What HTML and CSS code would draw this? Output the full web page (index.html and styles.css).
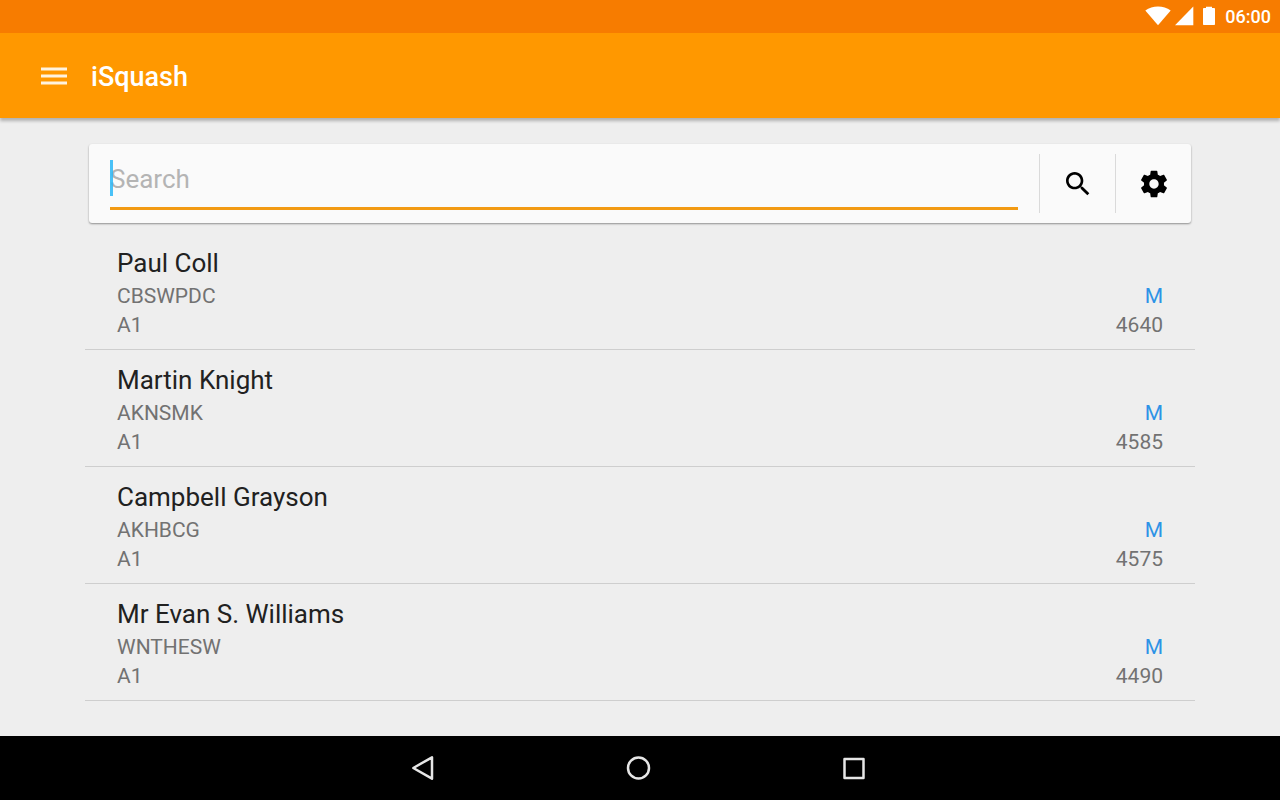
FILE: index.html
```html
<!DOCTYPE html>
<html lang="en">
<head>
    <meta charset="UTF-8">
    <meta name="viewport" content="width=device-width, initial-scale=1.0">
    <title>iSquash</title>
    <link rel="stylesheet" href="styles.css">
</head>
<body>
    <div class="status-bar">
        <svg class="wifi" width="26" height="20" viewBox="0 0 26 20" aria-hidden="true">
            <path d="M13 19.2 0.3 4.6C4 1.800 8.300 0.500 13 0.500s9 1.300 12.700 4.100z"/>
        </svg>
        <svg class="signal" width="20" height="20" viewBox="0 0 20 20" aria-hidden="true">
            <path d="M0 19.200 18.300 0.500v18.700z"/>
        </svg>
        <svg class="battery" width="14" height="20" viewBox="0 0 14 20" aria-hidden="true">
            <path d="M4 0.800h6v1.200h2.200c.5 0 .8.400.8.900v15.200c0 .600-.4 1-1 1H2c-.600 0-1-.4-1-1V2.900c0-.5.300-.9.800-.9H4z"/>
        </svg>
        <span class="time">06:00</span>
    </div>

    <header class="app-bar">
        <button type="button" class="menu-button" aria-label="Menu">
            <svg width="26" height="18" viewBox="0 0 26 18">
                <path d="M0 0.500h26v3H0zM0 7.500h26v3H0zM0 14.500h26v3H0z"/>
            </svg>
        </button>
        <h1>iSquash</h1>
    </header>

    <main class="content">
        <form class="search-card" role="search">
            <div class="search-field">
                <input type="text" name="search" placeholder="Search" aria-label="Search" autocomplete="off">
            </div>
            <button type="submit" class="card-button" aria-label="Search players">
                <svg width="32" height="32" viewBox="0 0 24 24">
                    <path d="M15.500 14h-.79l-.28-.27C15.410 12.590 16 11.110 16 9.500 16 5.910 13.090 3 9.500 3S3 5.910 3 9.500 5.910 16 9.500 16c1.610 0 3.090-.59 4.230-1.570l.27.28v.79l5 4.990L20.490 19l-4.990-5zm-6 0C7.010 14 5 11.990 5 9.500S7.010 5 9.500 5 14 7.010 14 9.500 11.990 14 9.500 14z"/>
                </svg>
            </button>
            <button type="button" class="card-button" aria-label="Settings">
                <svg width="32" height="32" viewBox="0 0 24 24">
                    <path d="M19.430 12.980c.04-.32.070-.64.070-.98s-.03-.66-.07-.98l2.110-1.650c.19-.15.240-.42.120-.64l-2-3.460c-.12-.22-.39-.3-.61-.22l-2.490 1c-.52-.4-1.080-.73-1.690-.98l-.38-2.650C14.460 2.180 14.250 2 14 2h-4c-.25 0-.46.180-.49.420l-.38 2.650c-.61.250-1.170.590-1.690.980l-2.490-1c-.23-.09-.49 0-.61.220l-2 3.460c-.13.220-.07.490.120.640l2.110 1.650c-.04.320-.07.650-.07.980s.030.660.070.980l-2.110 1.650c-.19.150-.24.420-.12.640l2 3.460c.12.220.390.300.610.220l2.490-1c.52.400 1.080.730 1.690.980l.38 2.650c.03.240.240.420.490.420h4c.25 0 .46-.18.490-.42l.38-2.650c.61-.25 1.170-.59 1.690-.98l2.490 1c.23.090.490 0 .61-.22l2-3.460c.12-.22.070-.49-.12-.64l-2.110-1.650zM12 15.500c-1.930 0-3.500-1.570-3.500-3.500s1.570-3.500 3.500-3.500 3.500 1.570 3.500 3.500-1.570 3.500-3.500 3.500z"/>
                </svg>
            </button>
        </form>

        <ul class="player-list">
            <li class="player">
                <h2>Paul Coll</h2>
                <div class="line"><span>CBSWPDC</span><span class="gender">M</span></div>
                <div class="line"><span>A1</span><span>4640</span></div>
            </li>
            <li class="player">
                <h2>Martin Knight</h2>
                <div class="line"><span>AKNSMK</span><span class="gender">M</span></div>
                <div class="line"><span>A1</span><span>4585</span></div>
            </li>
            <li class="player">
                <h2>Campbell Grayson</h2>
                <div class="line"><span>AKHBCG</span><span class="gender">M</span></div>
                <div class="line"><span>A1</span><span>4575</span></div>
            </li>
            <li class="player">
                <h2>Mr Evan S. Williams</h2>
                <div class="line"><span>WNTHESW</span><span class="gender">M</span></div>
                <div class="line"><span>A1</span><span>4490</span></div>
            </li>
        </ul>
    </main>

    <nav class="nav-bar">
        <button type="button" aria-label="Back">
            <svg width="32" height="32" viewBox="0 0 32 32">
                <path d="M26 5.300v21.400L7.300 16z"/>
            </svg>
        </button>
        <button type="button" aria-label="Home">
            <svg width="32" height="32" viewBox="0 0 32 32">
                <circle cx="16.500" cy="16" r="10.500"/>
            </svg>
        </button>
        <button type="button" aria-label="Recent apps">
            <svg width="32" height="32" viewBox="0 0 32 32">
                <rect x="6.500" y="7" width="19" height="19"/>
            </svg>
        </button>
    </nav>
</body>
</html>
```
FILE: styles.css
```css
* {
    margin: 0;
    padding: 0;
    box-sizing: border-box;
}

body {
    font-family: Roboto, "Noto Sans", sans-serif;
    background: #eee;
    color: #212121;
    min-height: 100vh;
    display: flex;
    flex-direction: column;
}

button {
    background: none;
    border: none;
    cursor: pointer;
    display: flex;
    align-items: center;
    justify-content: center;
}

/* Status bar */
.status-bar {
    display: flex;
    align-items: center;
    justify-content: flex-end;
    height: 33px;
    padding: 0 9px 1px 0;
    background: #f77c00;
    color: #fff;
}

.status-bar svg {
    fill: #fff;
}

.signal {
    margin-left: 4px;
}

.battery {
    margin-left: 7px;
}

.time {
    margin-left: 9px;
    font-size: 18px;
    font-weight: 500;
}

/* App bar */
.app-bar {
    display: flex;
    align-items: center;
    height: 85px;
    padding-left: 40px;
    background: #ff9800;
    color: #fff;
    box-shadow: 0 3px 3px rgba(0, 0, 0, 0.25);
}

.menu-button {
    width: 27px;
    height: 48px;
}

.menu-button svg {
    fill: #fff3df;
}

.app-bar h1 {
    margin-left: 24px;
    padding-top: 2px;
    font-size: 27px;
    font-weight: 500;
}

/* Content */
.content {
    flex: 1;
    padding: 26px 85px 0;
}

.search-card {
    display: flex;
    height: 79px;
    margin: 0 4px 10px;
    background: #fafafa;
    border-radius: 3px;
    box-shadow: 0 1px 2px rgba(0, 0, 0, 0.4);
}

.search-field {
    position: relative;
    flex: 1;
    margin: 0 21px;
    padding-top: 12px;
}

/* text cursor */
.search-field::before {
    content: "";
    position: absolute;
    left: 0;
    top: 16px;
    width: 3px;
    height: 36px;
    background: #29b6f6;
    opacity: 0.85;
}

.search-field input {
    display: block;
    width: 100%;
    height: 54px;
    padding-bottom: 6px;
    border: none;
    border-bottom: 3px solid #f29a12;
    background: none;
    outline: none;
    font-family: inherit;
    font-size: 26px;
    color: #212121;
    caret-color: #29b6f6;
}

.search-field input::placeholder {
    color: #b4b4b4;
}

.card-button {
    width: 76px;
    height: 59px;
    margin-top: 10px;
    border-left: 1px solid #dadada;
}

/* Players */
.player-list {
    list-style: none;
}

.player {
    padding: 13px 32px 9px;
    border-bottom: 1px solid #cecece;
}

.player h2 {
    margin-bottom: 2px;
    font-size: 26px;
    font-weight: 400;
    line-height: 34px;
}

.line {
    display: flex;
    justify-content: space-between;
    font-size: 21px;
    line-height: 29px;
    color: #727272;
}

.gender {
    color: #2d93e6;
}

/* Navigation bar */
.nav-bar {
    display: flex;
    justify-content: center;
    height: 64px;
    padding-right: 4px;
    background: #000;
}

.nav-bar button {
    width: 216px;
}

.nav-bar svg {
    fill: none;
    stroke: #e6e6e6;
    stroke-width: 2.500;
    stroke-linejoin: round;
}
```
